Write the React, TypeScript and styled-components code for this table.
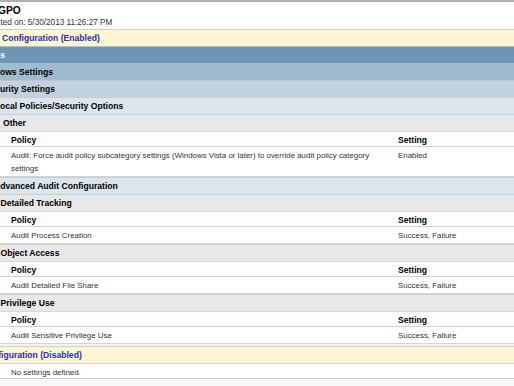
import React from "react";
import styled, { createGlobalStyle } from "styled-components";

const Global = createGlobalStyle`
  html, body { margin: 0; padding: 0; background: #ffffff; overflow: hidden; }
  body { font-family: "Liberation Sans", Arial, sans-serif; }
`;

const tones = {
  yellow: { bg: "#fdf5d4", border: "#cfcfcf", color: "#2e2eaa" },
  dark: { bg: "#6e96b4", border: "#b4bcc4", color: "#ffffff" },
  mid: { bg: "#a2bacd", border: "#b2bac2", color: "#000000" },
  light: { bg: "#c2d3df", border: "#bcc4cc", color: "#000000" },
  pale: { bg: "#dbe5ed", border: "#c4ccd4", color: "#000000" },
  gray: { bg: "#e8e8e8", border: "#cfcfcf", color: "#000000" },
};
type Tone = keyof typeof tones;

const Page = styled.div`
  width: 514px;
  height: 386px;
  overflow: hidden;
  border-top: 2px solid #b0b0b0;
  box-sizing: border-box;
  display: flex;
  flex-direction: column;
`;

const Header = styled.div`
  height: 27px;
  flex: none;
  display: flex;
  flex-direction: column;
  white-space: nowrap;
  overflow: hidden;
`;

const Title = styled.div`
  font-weight: bold;
  font-size: 10.2px;
  line-height: 12px;
  padding-top: 3px;
  margin-left: -2px;
  color: #000;
`;

const Stamp = styled.div<{ $shift: number }>`
  font-size: 8.2px;
  line-height: 10px;
  padding-top: 1px;
  color: #333;
  margin-left: ${(p) => p.$shift}px;
`;

const Band = styled.div<{ $tone: Tone }>`
  height: 16px;
  flex: none;
  border-top: 1px solid ${(p) => tones[p.$tone].border};
  background: ${(p) => tones[p.$tone].bg};
  color: ${(p) => tones[p.$tone].color};
  display: flex;
  align-items: center;
  font-weight: bold;
  font-size: 8.6px;
  white-space: nowrap;
  overflow: hidden;
`;

const Label = styled.span<{ $shift: number }>`
  margin-left: ${(p) => p.$shift}px;
`;

const Table = styled.div`
  display: grid;
  grid-template-columns: 398px 1fr;
  background: #fcfcfc;
  border-top: 1px solid #d8d8d8;
  flex: none;
`;

const HeadCell = styled.div<{ $first?: boolean }>`
  height: 15px;
  box-sizing: border-box;
  padding: 3px 0 0 ${(p) => (p.$first ? 11 : 0)}px;
  font-weight: bold;
  font-size: 8.6px;
  line-height: 11px;
  color: #000;
  border-bottom: 1px solid #d4d4d4;
  background: #fdfdfd;
`;

const Cell = styled.div<{ $first?: boolean }>`
  padding: 2px ${(p) => (p.$first ? 22 : 6)}px 1px ${(p) => (p.$first ? 11 : 0)}px;
  font-size: 7.9px;
  line-height: 13px;
  color: #333;
  border-bottom: 1px solid #d4d4d4;
  background: #ffffff;
`;

const Gap = styled.div`
  height: 2px;
  flex: none;
  background: #f4f4f4;
`;

const Note = styled.div`
  height: 16px;
  box-sizing: border-box;
  padding: 2px 0 0 11px;
  font-size: 7.9px;
  line-height: 13px;
  color: #333;
  background: #ffffff;
  border-top: 1px solid #d4d4d4;
  border-bottom: 1px solid #c8c8c8;
  flex: none;
`;

const Rest = styled.div`
  flex: 1;
  background: #f8f8f8;
`;

type Row = [string, string];

const PolicyTable = ({ rows }: { rows: Row[] }) => (
  <Table>
    <HeadCell $first>Policy</HeadCell>
    <HeadCell>Setting</HeadCell>
    {rows.map(([p, s]) => (
      <React.Fragment key={p}>
        <Cell $first>{p}</Cell>
        <Cell>{s}</Cell>
      </React.Fragment>
    ))}
  </Table>
);

export default function App() {
  return (
    <>
      <Global />
      <Page>
        <Header>
          <Title>GPO</Title>
          <Stamp $shift={-40}>Data collected on: 5/30/2013 11:26:27 PM</Stamp>
        </Header>
        <Band $tone="yellow">
          <Label $shift={-41}>Computer Configuration (Enabled)</Label>
        </Band>
        <Band $tone="dark">
          <Label $shift={-27.5}>Policies</Label>
        </Band>
        <Band $tone="mid">
          <Label $shift={-21}>Windows Settings</Label>
        </Band>
        <Band $tone="light">
          <Label $shift={-15.3}>Security Settings</Label>
        </Band>
        <Band $tone="pale">
          <Label $shift={-5.3}>Local Policies/Security Options</Label>
        </Band>
        <Band $tone="gray">
          <Label $shift={3}>Other</Label>
        </Band>
        <PolicyTable
          rows={[
            [
              "Audit: Force audit policy subcategory settings (Windows Vista or later) to override audit policy category settings",
              "Enabled",
            ],
          ]}
        />
        <Band $tone="pale">
          <Label $shift={-6}>Advanced Audit Configuration</Label>
        </Band>
        <Band $tone="gray">
          <Label $shift={0.5}>Detailed Tracking</Label>
        </Band>
        <PolicyTable rows={[["Audit Process Creation", "Success, Failure"]]} />
        <Band $tone="gray">
          <Label $shift={0.5}>Object Access</Label>
        </Band>
        <PolicyTable rows={[["Audit Detailed File Share", "Success, Failure"]]} />
        <Band $tone="gray">
          <Label $shift={0.5}>Privilege Use</Label>
        </Band>
        <PolicyTable rows={[["Audit Sensitive Privilege Use", "Success, Failure"]]} />
        <Gap />
        <Band $tone="yellow">
          <Label $shift={-40}>User Configuration (Disabled)</Label>
        </Band>
        <Note>No settings defined.</Note>
        <Rest />
      </Page>
    </>
  );
}
